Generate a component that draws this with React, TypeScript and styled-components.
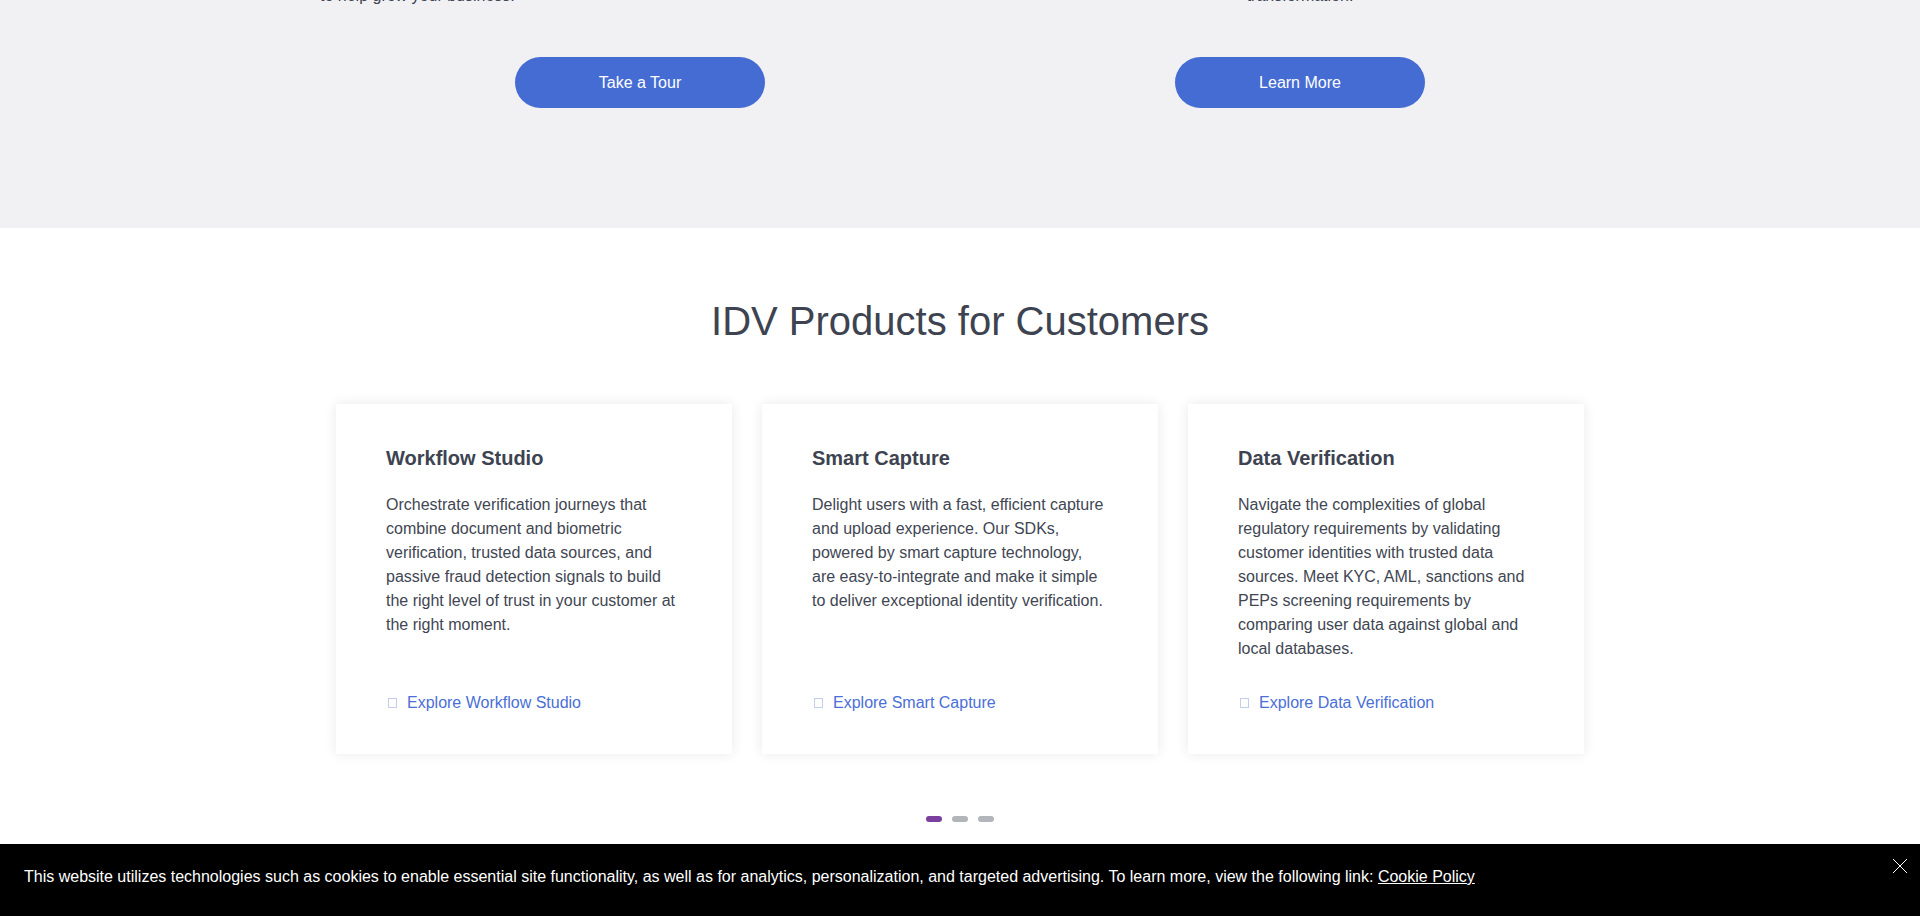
import React from "react";
import styled, { createGlobalStyle } from "styled-components";

const GlobalStyle = createGlobalStyle`
  html, body {
    margin: 0;
    padding: 0;
    background: #ffffff;
    font-family: "Liberation Sans", Arial, Helvetica, sans-serif;
    color: #3d4350;
  }
  * { box-sizing: border-box; }
`;

const Page = styled.div`
  width: 100%;
  min-height: 916px;
  overflow: hidden;
`;

const HeroTail = styled.section`
  background: #f1f1f3;
  height: 228px;
  overflow: hidden;
`;

const HeroColumns = styled.div`
  width: 1320px;
  margin: 0 auto;
  display: grid;
  grid-template-columns: 1fr 1fr;
`;

const HeroColumn = styled.div<{ $align: "left" | "center" }>`
  padding-left: 20px;
  display: flex;
  flex-direction: column;
  align-items: center;
  text-align: ${(p) => p.$align};
`;

const TailText = styled.p`
  align-self: stretch;
  margin: -16px 0 0;
  font-size: 16px;
  line-height: 24px;
  color: #3d4350;
`;

const PillButton = styled.a`
  margin-top: 49px;
  width: 250px;
  height: 51px;
  border-radius: 26px;
  background: #456cd3;
  color: #ffffff;
  font-size: 16px;
  display: flex;
  align-items: center;
  justify-content: center;
  text-decoration: none;
  cursor: pointer;
`;

const Products = styled.section`
  padding-top: 70px;
  display: flex;
  flex-direction: column;
  align-items: center;
`;

const Heading = styled.h2`
  margin: 0;
  font-size: 40px;
  line-height: 46px;
  font-weight: 400;
  color: #3d4350;
`;

const CardRow = styled.div`
  margin-top: 60px;
  display: grid;
  grid-template-columns: repeat(3, 396px);
  gap: 30px;
  justify-content: center;
`;

const Card = styled.article`
  background: #ffffff;
  box-shadow: 0 0 12px rgba(0, 0, 0, 0.09);
  padding: 41px 50px 39px 50px;
  display: flex;
  flex-direction: column;
`;

const CardTitle = styled.h3`
  margin: 0 0 22px;
  font-size: 20px;
  line-height: 26px;
  font-weight: 700;
  color: #3d4350;
`;

const CardBody = styled.p`
  margin: 0 0 30px;
  font-size: 16px;
  line-height: 24px;
  color: #414652;
`;

const CardLink = styled.a`
  margin-top: auto;
  font-size: 16px;
  line-height: 24px;
  color: #4a6fd7;
  text-decoration: none;
  cursor: pointer;
`;

const Tofu = styled.span`
  display: inline-block;
  width: 9px;
  height: 10px;
  margin: 0 10px 0 2px;
  border: 1px solid #c3cdec;
`;

const Dots = styled.div`
  margin-top: 62px;
  display: flex;
  gap: 10px;
  padding-bottom: 120px;
`;

const Dot = styled.span<{ $active?: boolean }>`
  width: 16px;
  height: 6px;
  border-radius: 3px;
  background: ${(p) => (p.$active ? "#7b3f9e" : "#b2b6bb")};
`;

const CookieBar = styled.div`
  position: fixed;
  left: 0;
  right: 0;
  bottom: 0;
  height: 72px;
  background: #000000;
  padding: 24px 24px;
  color: #ffffff;
  font-size: 16px;
  line-height: 18px;
`;

const CookieLink = styled.a`
  color: #ffffff;
  text-decoration: underline;
  cursor: pointer;
`;

const CloseButton = styled.button`
  position: absolute;
  top: 14px;
  right: 12px;
  width: 16px;
  height: 16px;
  padding: 0;
  border: 0;
  background: transparent;
  cursor: pointer;
  display: flex;
`;

const products = [
  {
    title: "Workflow Studio",
    body: "Orchestrate verification journeys that combine document and biometric verification, trusted data sources, and passive fraud detection signals to build the right level of trust in your customer at the right moment.",
    link: "Explore Workflow Studio",
  },
  {
    title: "Smart Capture",
    body: "Delight users with a fast, efficient capture and upload experience. Our SDKs, powered by smart capture technology, are easy-to-integrate and make it simple to deliver exceptional identity verification.",
    link: "Explore Smart Capture",
  },
  {
    title: "Data Verification",
    body: "Navigate the complexities of global regulatory requirements by validating customer identities with trusted data sources. Meet KYC, AML, sanctions and PEPs screening requirements by comparing user data against global and local databases.",
    link: "Explore Data Verification",
  },
];

export default function App() {
  return (
    <Page>
      <GlobalStyle />
      <HeroTail>
        <HeroColumns>
          <HeroColumn $align="left">
            <TailText>to help grow your business.</TailText>
            <PillButton>Take a Tour</PillButton>
          </HeroColumn>
          <HeroColumn $align="center">
            <TailText>transformation.</TailText>
            <PillButton>Learn More</PillButton>
          </HeroColumn>
        </HeroColumns>
      </HeroTail>

      <Products>
        <Heading>IDV Products for Customers</Heading>
        <CardRow>
          {products.map((p) => (
            <Card key={p.title}>
              <CardTitle>{p.title}</CardTitle>
              <CardBody>{p.body}</CardBody>
              <CardLink>
                <Tofu />
                {p.link}
              </CardLink>
            </Card>
          ))}
        </CardRow>
        <Dots>
          <Dot $active />
          <Dot />
          <Dot />
        </Dots>
      </Products>

      <CookieBar>
        This website utilizes technologies such as cookies to enable essential site functionality, as well as for analytics, personalization, and targeted advertising. To learn more, view the following link:{" "}
        <CookieLink>Cookie Policy</CookieLink>
        <CloseButton aria-label="Close">
          <svg width="16" height="16" viewBox="0 0 16 16">
            <path d="M1 1 L15 15 M15 1 L1 15" stroke="#ffffff" strokeWidth="1" fill="none" />
          </svg>
        </CloseButton>
      </CookieBar>
    </Page>
  );
}
